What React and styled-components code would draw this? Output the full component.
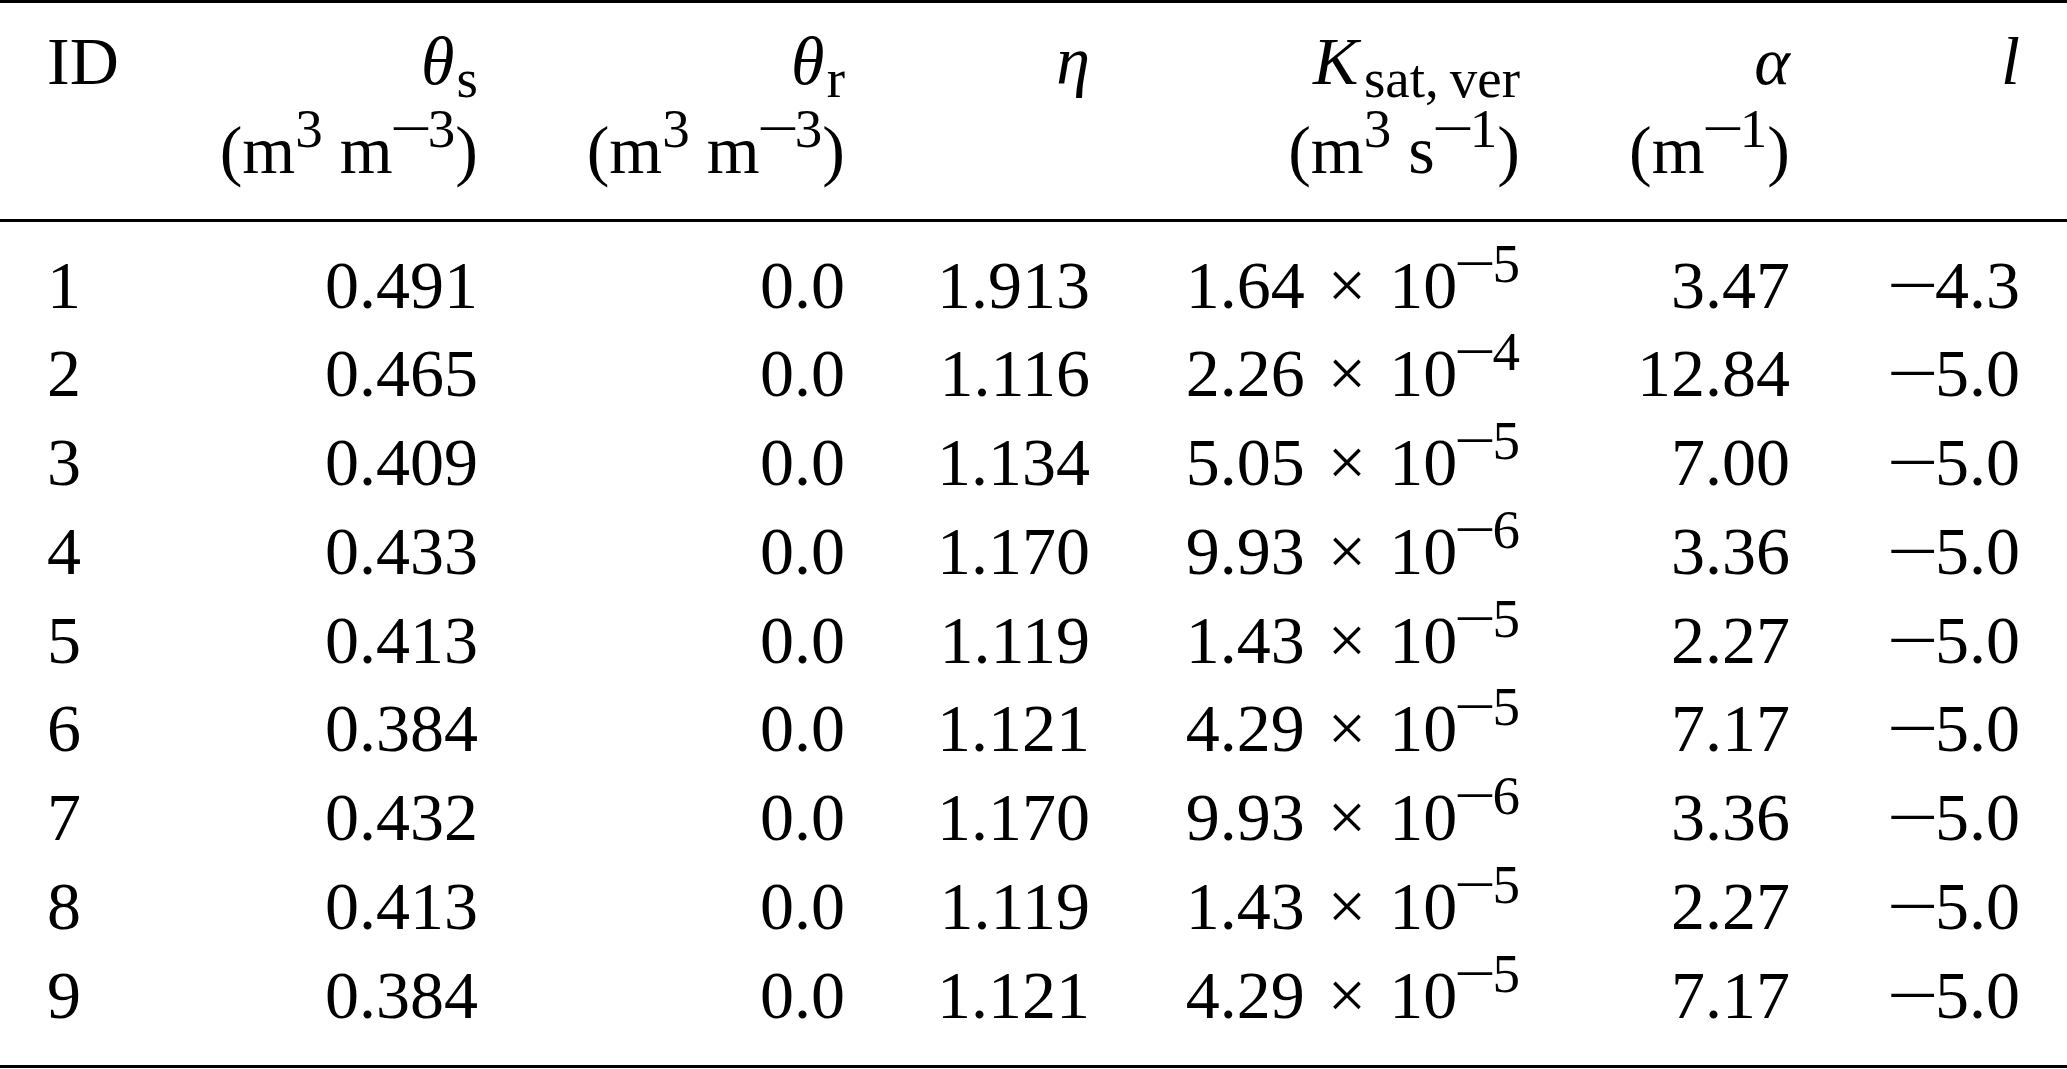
import React from "react";
import styled, { createGlobalStyle } from "styled-components";

const GlobalStyle = createGlobalStyle`
  html, body {
    margin: 0;
    padding: 0;
    background: #fff;
  }
  body {
    font-family: "Liberation Serif", "Times New Roman", serif;
    color: #000;
  }
`;

// right edges of the columns sit at 478, 845, 1090, 1520, 1790, 2020
const COLS = "100px 331px 367px 245px 430px 270px 230px";

const Table = styled.div`
  width: 2067px;
  box-sizing: border-box;
  padding: 0 47px;
  border-top: 3px solid #000;
  border-bottom: 3px solid #000;
  font-size: 68px;
`;

const Head = styled.div`
  display: grid;
  grid-template-columns: ${COLS};
  margin: 0 -47px;
  padding: 13.5px 47px 24.5px;
  border-bottom: 3px solid #000;
  line-height: 89px;
`;

const Body = styled.div`
  padding: 18.5px 0 25.5px;
`;

const Row = styled.div`
  display: grid;
  grid-template-columns: ${COLS};
  line-height: 88.75px;
  height: 88.75px;
`;

const Cell = styled.div`
  text-align: ${(p) => (p.left ? "left" : "right")};
  white-space: nowrap;
`;

const Line = styled.div`
  height: 89px;
`;

const Var = styled.i`
  font-style: italic;
`;

const Sup = styled.span`
  position: relative;
  top: -26px;
  font-size: 55px;
  line-height: 0;
`;

const Sub = styled.span`
  position: relative;
  top: 13px;
  margin-left: ${(p) => (p.wide ? "0.1em" : "0.04em")};
  font-size: 55px;
  line-height: 0;
`;

// math minus: longer than the text one, kept inside its own box
const Minus = styled.span`
  display: inline-block;
  width: 0.64em;
  text-align: center;
  transform: scaleX(1.35);
`;

const Op = styled.span`
  margin: 0 0.34em;
`;

const rows = [
  ["1", "0.491", "0.0", "1.913", "1.64", "5", "3.47", "4.3"],
  ["2", "0.465", "0.0", "1.116", "2.26", "4", "12.84", "5.0"],
  ["3", "0.409", "0.0", "1.134", "5.05", "5", "7.00", "5.0"],
  ["4", "0.433", "0.0", "1.170", "9.93", "6", "3.36", "5.0"],
  ["5", "0.413", "0.0", "1.119", "1.43", "5", "2.27", "5.0"],
  ["6", "0.384", "0.0", "1.121", "4.29", "5", "7.17", "5.0"],
  ["7", "0.432", "0.0", "1.170", "9.93", "6", "3.36", "5.0"],
  ["8", "0.413", "0.0", "1.119", "1.43", "5", "2.27", "5.0"],
  ["9", "0.384", "0.0", "1.121", "4.29", "5", "7.17", "5.0"],
];

const Unit = ({ children }) => <Line>({children})</Line>;

const Neg = ({ children }) => (
  <>
    <Minus>−</Minus>
    {children}
  </>
);

export default function App() {
  return (
    <>
      <GlobalStyle />
      <Table>
        <Head>
          <Cell left>
            <Line>ID</Line>
          </Cell>
          <Cell>
            <Line>
              <Var>θ</Var>
              <Sub>s</Sub>
            </Line>
            <Unit>
              m<Sup>3</Sup> m<Sup><Neg>3</Neg></Sup>
            </Unit>
          </Cell>
          <Cell>
            <Line>
              <Var>θ</Var>
              <Sub>r</Sub>
            </Line>
            <Unit>
              m<Sup>3</Sup> m<Sup><Neg>3</Neg></Sup>
            </Unit>
          </Cell>
          <Cell>
            <Line>
              <Var>η</Var>
            </Line>
          </Cell>
          <Cell>
            <Line>
              <Var>K</Var>
              <Sub wide>{"sat,\u2009ver"}</Sub>
            </Line>
            <Unit>
              m<Sup>3</Sup> s<Sup><Neg>1</Neg></Sup>
            </Unit>
          </Cell>
          <Cell>
            <Line>
              <Var>α</Var>
            </Line>
            <Unit>
              m<Sup><Neg>1</Neg></Sup>
            </Unit>
          </Cell>
          <Cell>
            <Line>
              <Var>l</Var>
            </Line>
          </Cell>
        </Head>
        <Body>
          {rows.map((r) => (
            <Row key={r[0]}>
              <Cell left>{r[0]}</Cell>
              <Cell>{r[1]}</Cell>
              <Cell>{r[2]}</Cell>
              <Cell>{r[3]}</Cell>
              <Cell>
                {r[4]}
                <Op>×</Op>10
                <Sup>
                  <Neg>{r[5]}</Neg>
                </Sup>
              </Cell>
              <Cell>{r[6]}</Cell>
              <Cell>
                <Neg>{r[7]}</Neg>
              </Cell>
            </Row>
          ))}
        </Body>
      </Table>
    </>
  );
}
